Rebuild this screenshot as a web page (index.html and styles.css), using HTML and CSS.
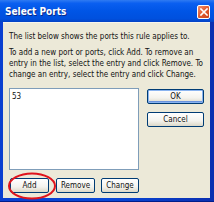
FILE: index.html
```html
<!DOCTYPE html>
<html>
<head>
<meta charset="utf-8">
<link rel="stylesheet" href="styles.css">
</head>
<body>
<div class="window">
  <div class="titlebar">
    <span class="title">Select Ports</span>
    <span class="close"><svg width="8" height="8" viewBox="0 0 8 8"><path d="M1 1 L7 7 M7 1 L1 7" stroke="#fff" stroke-width="1.6" stroke-linecap="square"/></svg></span>
  </div>
  <div class="body">
    <p class="p1">The list below shows the ports this rule applies to.</p>
    <p class="p2">To add a new port or ports, click Add. To remove an entry in the list, select the entry and click Remove. To change an entry, select the entry and click Change.</p>
    <div class="main">
      <div class="listbox"><div class="item">53</div></div>
      <div class="side">
        <div class="btn default">OK</div>
        <div class="btn">Cancel</div>
      </div>
    </div>
    <div class="bottom">
      <div class="btn add">Add</div>
      <div class="btn remove">Remove</div>
      <div class="btn change">Change</div>
    </div>
    <svg class="circle" width="52" height="30" viewBox="0 0 52 30"><ellipse cx="26" cy="15" rx="23" ry="12.5" fill="none" stroke="#e0141c" stroke-width="2"/></svg>
  </div>
</div>
</body>
</html>
```
FILE: styles.css
```css
html, body { margin: 0; padding: 0; }
body { width: 214px; height: 202px; overflow: hidden; font-family: "DejaVu Sans Condensed", "DejaVu Sans", sans-serif; }
.window {
  width: 214px; height: 202px; box-sizing: border-box;
  background: linear-gradient(to right, #0a3fd0, #0848d8 50%, #0b2fb0);
  padding: 0 4px 3px 3px;
  display: flex; flex-direction: column;
  border-bottom: 1px solid #001d8a;
}
.titlebar {
  height: 22px; margin: 0 -4px 0 -3px; padding: 0 5px;
  display: flex; align-items: center; justify-content: space-between;
  background: linear-gradient(to bottom, #2f7bf2 0%, #0a5ff0 15%, #0055e6 50%, #0050de 85%, #0342c4 100%);
}
.title { color: #fff; font-weight: bold; font-size: 10px; letter-spacing: 0; margin-top: 1px; text-shadow: 1px 1px 0 #0a2a8a; }
.close {
  width: 13px; height: 14px; box-sizing: border-box; margin-right: -1px; margin-top: 1px;
  border: 1px solid #fff; border-radius: 2px;
  background: linear-gradient(135deg, #f09070, #e25b2e 50%, #c8421c);
  display: flex; align-items: center; justify-content: center;
}
.body {
  flex: 1; background: #ece9d8; position: relative;
  padding: 8px 6px 0 6px; font-size: 8px; color: #111;
  border-top: 1px solid #f6f4ec;
}
p { margin: 0; line-height: 11px; }
.p2 { margin-top: 5px; }
.main { display: flex; margin-top: 8px; gap: 8px; }
.listbox {
  width: 130px; height: 82px; box-sizing: border-box;
  background: #fff; border: 1px solid #7f9db9; padding: 2px 2px;
}
.item { line-height: 11px; }
.side { width: 57px; display: flex; flex-direction: column; gap: 8px; padding-top: 1px; }
.btn {
  height: 15px; box-sizing: border-box;
  border: 1px solid #003c74; border-radius: 2px;
  background: linear-gradient(to bottom, #ffffff, #f4f3ee 60%, #dcd8c8);
  display: flex; align-items: center; justify-content: center;
  font-size: 8px; color: #111;
}
.btn.default { box-shadow: inset 0 0 0 1px #8ab4f0, inset 0 -1px 0 1px #6b93dd; }
.bottom { display: flex; margin-top: 8px; }
.add { width: 39px; margin-left: 1px; }
.remove { width: 39px; margin-left: 7px; }
.change { width: 38px; margin-left: 6px; }
.circle { position: absolute; left: 3px; top: 148px; }
```
